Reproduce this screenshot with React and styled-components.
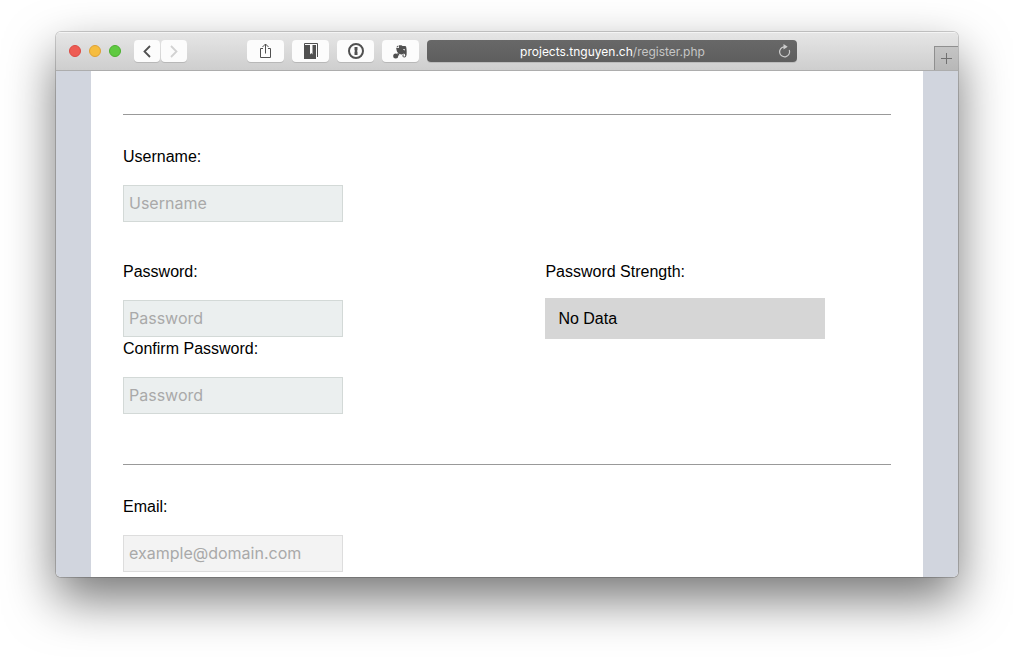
import React from "react";
import styled, { createGlobalStyle, css } from "styled-components";

const GlobalStyle = createGlobalStyle`
  *, *::before, *::after { box-sizing: border-box; }
  body {
    margin: 0;
    background: #fff;
    color: #000;
    font-family: "Liberation Sans", Arial, sans-serif;
    font-size: 16px;
    line-height: 24px;
  }
  button, input { font: inherit; margin: 0; }
`;

const Desktop = styled.div`
  display: flex;
  height: 100vh;
  padding: 32px 56px 80px;
  overflow: hidden;
`;

const BrowserWindow = styled.div`
  flex: 1;
  min-width: 0;
  display: flex;
  flex-direction: column;
  overflow: hidden;
  border-radius: 5px;
  box-shadow: 0 0 0 1px rgba(0, 0, 0, 0.18), 0 22px 50px rgba(0, 0, 0, 0.54);
`;

const Toolbar = styled.header`
  flex: none;
  display: flex;
  align-items: center;
  height: 39px;
  padding-left: 13px;
  background: linear-gradient(#e6e6e6, #cecece);
  border-bottom: 1px solid #adadad;
  box-shadow: inset 0 1px #f4f4f4;
`;

const Lights = styled.div`
  display: flex;
  gap: 8px;
`;

const Light = styled.button`
  width: 12px;
  height: 12px;
  padding: 0;
  border: 1px solid ${(p) => p.$edge};
  border-radius: 50%;
  background: ${(p) => p.$fill};
`;

const NavButtons = styled.nav`
  display: flex;
  gap: 1px;
  margin: 0 60px 0 13px;
`;

const Tools = styled.div`
  display: flex;
  gap: 8px;
`;

const ToolButton = styled.button`
  display: flex;
  align-items: center;
  justify-content: center;
  width: ${(p) => (p.$narrow ? "26px" : "37px")};
  height: 22px;
  padding: 0;
  border: 0;
  border-radius: 4px;
  background: #fcfcfc;
  box-shadow: 0 1px #b8b8b8;
  color: ${(p) => (p.disabled ? "#d2d2d2" : "#505050")};
`;

const AddressBar = styled.div`
  flex: 1;
  min-width: 0;
  display: flex;
  align-items: center;
  height: 22px;
  margin: 0 137px 0 8px;
  padding: 0 6px 0 20px;
  border-radius: 4px;
  background: linear-gradient(#686868, #5e5e5e);
  box-shadow: 0 1px #bbb;
  font-family: Inter, "Liberation Sans", sans-serif;
  font-size: 12px;
`;

const Address = styled.a`
  flex: 1;
  padding-top: 2px;
  overflow: hidden;
  white-space: nowrap;
  text-align: center;
  text-decoration: none;
  color: #fff;
`;

const AddressPath = styled.span`
  color: #c6c6c6;
`;

const ReloadButton = styled.button`
  display: flex;
  padding: 0;
  border: 0;
  background: none;
  color: #ccc;
`;

const NewTabButton = styled.button`
  align-self: flex-end;
  display: flex;
  align-items: center;
  justify-content: center;
  width: 24px;
  height: 24px;
  padding: 0;
  border: solid #8f8f8f;
  border-width: 1px 0 0 1px;
  background: linear-gradient(#c4c4c4, #b8b8b8);
  color: #707070;
`;

const Viewport = styled.main`
  flex: 1;
  min-height: 0;
  overflow: hidden;
  padding: 0 35px;
  background: #d1d5de;
`;

const Page = styled.form`
  padding: 43px 32px;
  background: #fff;
`;

const Section = styled.section`
  padding: 30px 0 50px;
  border-top: 1px solid #999;
`;

const Row = styled.div`
  display: grid;
  grid-template-columns: 11fr 9fr;
  & + & { margin-top: 38px; }
`;

const labelText = css`
  display: block;
  width: fit-content;
`;

const Label = styled.label`
  ${labelText}
  margin-bottom: 16px;
`;

const StrengthLabel = styled.label`
  ${labelText}
  margin-bottom: 14px;
`;

const TextInput = styled.input`
  display: block;
  width: 220px;
  height: 37px;
  padding: 0 5px 1px;
  border: 1px solid ${(p) => (p.$plain ? "#dddddd" : "#d3d9d7")};
  border-radius: 0;
  background: ${(p) => (p.$plain ? "#f3f3f3" : "#ebefef")};
  font-family: Inter, sans-serif;
  font-size: 16px;
  &::placeholder { color: #a9a9a9; opacity: 1; }
`;

const Strength = styled.output`
  display: block;
  max-width: 280px;
  padding: 9px 13px 8px;
  background: #d6d6d6;
`;

function Field({ id, label, ...input }) {
  return (
    <div>
      <Label htmlFor={id}>{label}</Label>
      <TextInput id={id} name={id} {...input} />
    </div>
  );
}

const ShareIcon = () => (
  <svg width="13" height="16" viewBox="0 0 13 16" fill="none" stroke="currentColor">
    <path d="M4 5.500H1.500v9h10v-9H9M6.500 10.500V1M3.500 4l3-3 3 3" />
  </svg>
);

const BookmarkIcon = () => (
  <svg width="14" height="16" viewBox="0 0 14 16">
    <path fill="currentColor" d="M0 2h6v9.500L7.300 10l1.200 1.500V2H12v14H0z" />
    <path fill="none" stroke="currentColor" d="M.5 2V.5h13V14" />
  </svg>
);

const KeyholeIcon = () => (
  <svg width="16" height="16" viewBox="0 0 16 16">
    <circle cx="8" cy="8" r="7" fill="none" stroke="currentColor" strokeWidth="2" />
    <path fill="currentColor" d="M6.500 4h3v3.300l-.6.700.6.700V12h-3V8.700l.6-.7-.6-.7z" />
  </svg>
);

const ElephantIcon = () => (
  <svg width="15" height="15" viewBox="0 0 15 15" fill="currentColor">
    <path d="M3.200 3.300 5.300 1.300v2z" />
    <path
      fillRule="evenodd"
      d="M6 1.300h2.500l1 .8h2.300c1 0 1.300.6 1.500 1.400.4 2.200.5 4.300.3 7-.2 2-1 3-2.300 3-1.400 0-2-.8-1.900-1.900.1-.9.7-1.200 1.500-1.200v.9c-.5 0-.6.3-.6.600 0 .5.400.7.900.7.700 0 1-.5 1-1.300 0-.9-.6-1.600-1.400-1.600-.8 0-1.100.4-1.600.7-.8.3-1.800.1-2.500-.3C5 9.300 3.600 8 3.200 4.100H6zM10.300 5.200c0 .8.400 1 1.700 1.100-.1-1-.8-1.400-1.700-1.100z"
    />
    <circle cx="2.700" cy="12" r="2.500" />
    <path d="M4.200 9.300h2v2.200H4.500z" />
  </svg>
);

const ReloadIcon = () => (
  <svg width="13" height="14" viewBox="0 0 13 14">
    <path fill="none" stroke="currentColor" strokeWidth="1.200" d="M6 2.800a5 5 0 1 0 5.300 3.200" />
    <path fill="currentColor" d="M5.500 0v5.600L9.700 2.800z" />
  </svg>
);

const Chevron = ({ d }) => (
  <svg width="8" height="13" viewBox="0 0 8 13" fill="none" stroke="currentColor" strokeWidth="1.800">
    <path d={d} />
  </svg>
);

const PlusIcon = () => (
  <svg width="11" height="11" viewBox="0 0 11 11" stroke="currentColor">
    <path d="M5.500 0v11M0 5.500h11" />
  </svg>
);

export default function App() {
  return (
    <Desktop>
      <GlobalStyle />
      <BrowserWindow>
        <Toolbar>
          <Lights>
            <Light type="button" aria-label="Close" $fill="#ee5c54" $edge="#dc4a43" />
            <Light type="button" aria-label="Minimize" $fill="#f6bd40" $edge="#dfa134" />
            <Light type="button" aria-label="Zoom" $fill="#5fca41" $edge="#4bb02f" />
          </Lights>
          <NavButtons>
            <ToolButton type="button" $narrow aria-label="Back">
              <Chevron d="M7 1 1.500 6.500 7 12" />
            </ToolButton>
            <ToolButton type="button" $narrow disabled aria-label="Forward">
              <Chevron d="m1 1 5.500 5.500L1 12" />
            </ToolButton>
          </NavButtons>
          <Tools>
            <ToolButton type="button" aria-label="Share"><ShareIcon /></ToolButton>
            <ToolButton type="button" aria-label="Bookmarks"><BookmarkIcon /></ToolButton>
            <ToolButton type="button" aria-label="Passwords"><KeyholeIcon /></ToolButton>
            <ToolButton type="button" aria-label="Clip page"><ElephantIcon /></ToolButton>
          </Tools>
          <AddressBar>
            <Address href="#">projects.tnguyen.ch<AddressPath>/register.php</AddressPath></Address>
            <ReloadButton type="button" aria-label="Reload"><ReloadIcon /></ReloadButton>
          </AddressBar>
          <NewTabButton type="button" aria-label="New tab"><PlusIcon /></NewTabButton>
        </Toolbar>
        <Viewport>
          <Page>
            <Section>
              <Row>
                <Field id="username" label="Username:" type="text" placeholder="Username" />
              </Row>
              <Row>
                <div>
                  <Field id="password" label="Password:" type="password" placeholder="Password" />
                  <Field id="confirm" label="Confirm Password:" type="password" placeholder="Password" />
                </div>
                <div>
                  <StrengthLabel htmlFor="strength">Password Strength:</StrengthLabel>
                  <Strength id="strength">No Data</Strength>
                </div>
              </Row>
            </Section>
            <Section>
              <Field id="email" label="Email:" type="email" placeholder="example@domain.com" $plain />
            </Section>
          </Page>
        </Viewport>
      </BrowserWindow>
    </Desktop>
  );
}
